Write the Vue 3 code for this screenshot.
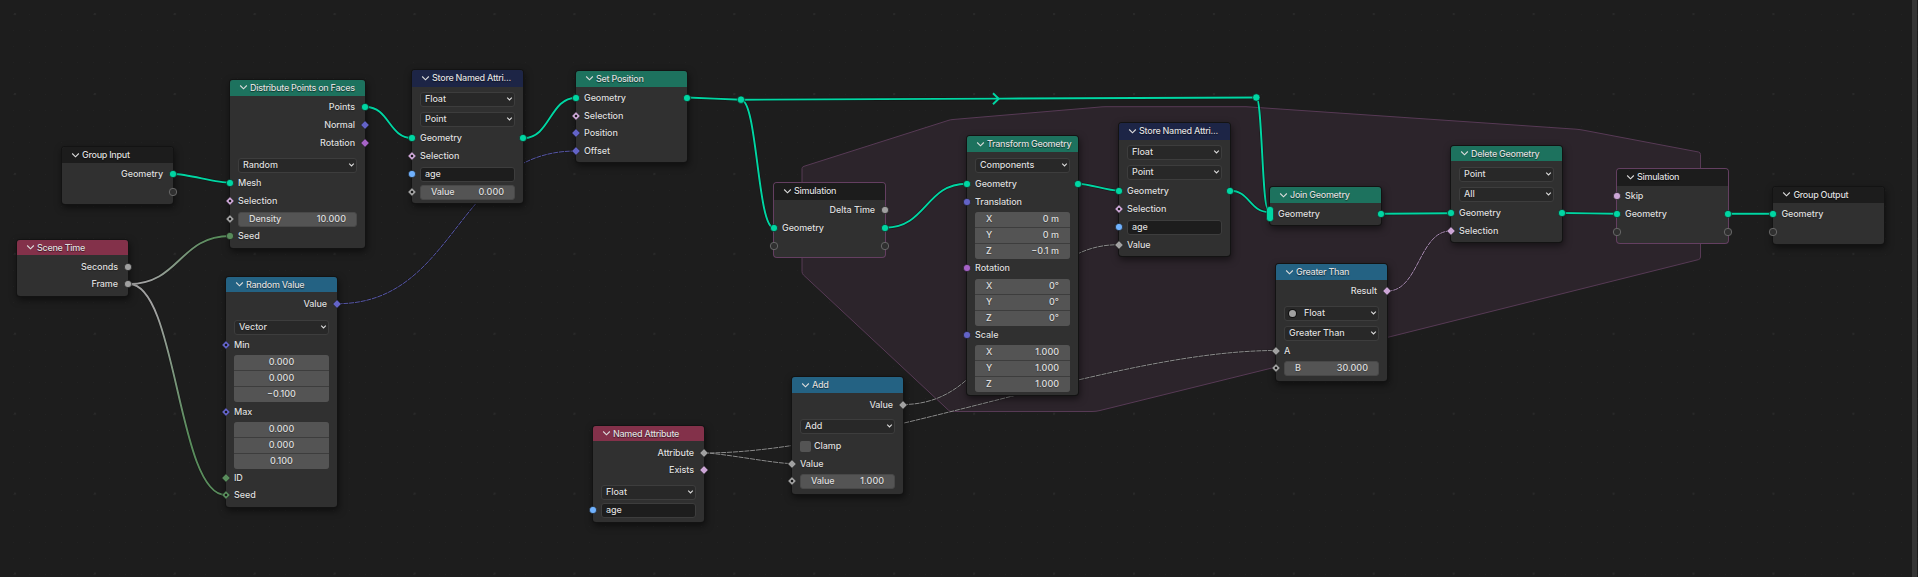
<script setup>
const C = {
  geo: '#00d6a3', vec: '#6363c7', rot: '#a663c7', bool: '#cca6d6',
  flt: '#a1a1a1', int: '#598c5c', str: '#70b2ff',
}
const o = (c, label, col, shape = 'dot') => ({ k: 'out', c, label, right: [col, shape] })
const i = (c, label, col, shape = 'dot') => ({ k: 'in', c, label, left: [col, shape] })
const both = (c, label, a, b) => ({ k: 'in', c, label, left: a, right: b })
const dd = (c, label, icon) => ({ k: 'select', c, label, icon })
const num = (c, label, value, col) => ({ k: 'num', c, label, value, left: [col, 'dia-dot'] })
const txt = (c, label) => ({ k: 'text', c, label, left: [C.str, 'dot'] })
const vec = (c, values, axes) => ({ k: 'vec', c, values, axes })
const G = [C.geo, 'dot']
const E = ['#303030', 'empty']

const rowH = { out: 14, in: 14, select: 16, num: 16, text: 16, vec: 48, check: 14 }

const raw = [
  { x: 62, y: 147, w: 111, b: 204, hd: 163, t: 155, kind: 'io', title: 'Group Input',
    rows: [o(174, 'Geometry', C.geo), { k: 'out', c: 192, label: '', right: E }] },
  { x: 17, y: 240, w: 111, b: 296, hd: 255, t: 247, kind: 'input', title: 'Scene Time',
    rows: [o(267, 'Seconds', C.flt), o(284, 'Frame', C.flt)] },
  { x: 230, y: 80, w: 135, b: 248, hd: 95.5, t: 87, kind: 'geo', title: 'Distribute Points on Faces',
    rows: [o(107, 'Points', C.geo), o(125, 'Normal', C.vec, 'dia'), o(143, 'Rotation', C.rot, 'dia'),
      dd(165, 'Random'), i(183, 'Mesh', C.geo), i(201, 'Selection', C.bool, 'dia-dot'),
      num(219, 'Density', '10.000', C.flt), i(236, 'Seed', C.int)] },
  { x: 226, y: 277, w: 111, b: 507, hd: 292, t: 284, kind: 'conv', title: 'Random Value',
    rows: [o(304, 'Value', C.vec, 'dia'), dd(327, 'Vector'), i(345, 'Min', C.vec, 'dia-dot'),
      vec(378, ['0.000', '0.000', '−0.100']), i(412, 'Max', C.vec, 'dia-dot'),
      vec(445, ['0.000', '0.000', '0.100']), i(478, 'ID', C.int, 'dia'), i(495, 'Seed', C.int, 'dia-dot')] },
  { x: 412, y: 70, w: 111, b: 203, hd: 86.5, t: 78, kind: 'attr', title: 'Store Named Attri...',
    rows: [dd(99, 'Float'), dd(119, 'Point'), both(138, 'Geometry', G, G),
      i(156, 'Selection', C.bool, 'dia-dot'), txt(174, 'age'), num(192, 'Value', '0.000', C.flt)] },
  { x: 576, y: 71, w: 111, b: 162, hd: 86.5, t: 79, kind: 'geo', title: 'Set Position',
    rows: [both(98, 'Geometry', G, G), i(116, 'Selection', C.bool, 'dia-dot'),
      i(133, 'Position', C.vec, 'dia'), i(151, 'Offset', C.vec, 'dia')] },
  { x: 593, y: 426, w: 111, b: 522, hd: 441, t: 433, kind: 'input', title: 'Named Attribute',
    rows: [o(453, 'Attribute', C.flt, 'dia'), o(470, 'Exists', C.bool, 'dia'), dd(492, 'Float'), txt(510, 'age')] },
  { x: 792, y: 377, w: 111, b: 494, hd: 393, t: 385, kind: 'conv', title: 'Add',
    rows: [o(404.5, 'Value', C.flt, 'dia'), dd(426, 'Add'), { k: 'check', c: 446, label: 'Clamp' },
      i(464, 'Value', C.flt, 'dia'), num(481, 'Value', '1.000', C.flt)] },
  { x: 774, y: 183, w: 111, b: 257, hd: 199.5, t: 191, kind: 'sim', title: 'Simulation',
    rows: [o(210, 'Delta Time', C.flt), both(228, 'Geometry', G, G), both(246, '', E, E)] },
  { x: 967, y: 136, w: 111, b: 394.5, hd: 152, t: 144, kind: 'geo', title: 'Transform Geometry',
    rows: [dd(165, 'Components'), both(184, 'Geometry', G, G), i(202, 'Translation', C.vec),
      vec(235, ['0 m', '0 m', '−0.1 m'], true), i(268, 'Rotation', C.rot),
      vec(302, ['0°', '0°', '0°'], true), i(335, 'Scale', C.vec),
      vec(368, ['1.000', '1.000', '1.000'], true)] },
  { x: 1119, y: 123, w: 111, b: 255.5, hd: 139.5, t: 131, kind: 'attr', title: 'Store Named Attri...',
    rows: [dd(152, 'Float'), dd(172, 'Point'), both(191, 'Geometry', G, G),
      i(209, 'Selection', C.bool, 'dia-dot'), txt(227, 'age'), i(245, 'Value', C.flt, 'dia')] },
  { x: 1270, y: 187, w: 111, b: 225, hd: 203, t: 195, kind: 'geo', title: 'Join Geometry',
    rows: [both(214, 'Geometry', [C.geo, 'multi'], G)] },
  { x: 1451, y: 146, w: 111, b: 242, hd: 161, t: 153, kind: 'geo', title: 'Delete Geometry',
    rows: [dd(174, 'Point'), dd(194, 'All'), both(213, 'Geometry', G, G), i(231, 'Selection', C.bool, 'dia')] },
  { x: 1276, y: 264, w: 111, b: 381, hd: 280, t: 272, kind: 'conv', title: 'Greater Than',
    rows: [o(291, 'Result', C.bool, 'dia'), dd(313, 'Float', true), dd(333, 'Greater Than'),
      i(350.5, 'A', C.flt, 'dia'), num(368, 'B', '30.000', C.flt)] },
  { x: 1617, y: 169, w: 111, b: 243, hd: 185.5, t: 177, kind: 'sim', title: 'Simulation',
    rows: [i(196, 'Skip', C.bool), both(214, 'Geometry', G, G), both(232, '', E, E)] },
  { x: 1773.4, y: 187, w: 111, b: 243.5, hd: 202.5, t: 194, kind: 'io', title: 'Group Output',
    rows: [i(214, 'Geometry', C.geo), { k: 'in', c: 232, label: '', left: E }] },
]

// Turn row centres into the gap that precedes each row in the node's column.
const nodes = raw.map((n) => {
  let end = n.hd
  const rows = n.rows.map((r) => {
    const h = rowH[r.k]
    const gap = r.c - h / 2 - end
    end = r.c + h / 2
    return { ...r, style: { height: h + 'px', marginTop: gap + 'px' } }
  })
  return {
    ...n, rows,
    style: { left: n.x + 'px', top: n.y + 'px', width: n.w + 'px', height: n.b - n.y + 'px' },
    head: { height: n.hd - n.y + 'px' },
  }
})

// Horizontal handles that shorten as the link gets flatter.
const curve = (x1, y1, x2, y2) => {
  const dx = Math.abs(x2 - x1)
  const h = 0.5 * dx * Math.min(1, (Math.abs(y2 - y1) / dx) * 3.25)
  return `M${x1} ${y1}C${x1 + h} ${y1} ${x2 - h} ${y2} ${x2} ${y2}`
}
const geoLinks = [
  [173.5, 174, 230, 182.7], [366, 107, 412, 138], [524, 138, 576, 97.7], [687.5, 97.5, 741, 99.7],
  [741, 99.7, 1256.3, 97.5], [741, 99.7, 773.7, 227.7], [885.7, 227.7, 966.5, 183.7],
  [1078, 183.7, 1118.5, 190.7], [1230.3, 190.7, 1269, 212], [1256.3, 97.5, 1268, 209],
  [1381, 213.8, 1450.3, 213.2], [1562, 213, 1616.5, 213.7], [1728.5, 213.7, 1773, 213.7],
].map((a) => curve(...a))
const fieldLinks = [
  [[337.5, 303.7, 576, 151], '#5656a8'],
  [[704, 453, 791, 463.5], '#8c8c8c'],
  [[704, 453, 1276, 350.5], '#8c8c8c'],
  [[903, 404.5, 1118.5, 244.7], '#8c8c8c'],
  [[1387.5, 291, 1450.5, 231], '#ab8cb4'],
].map(([a, c]) => ({ d: curve(...a), c }))
const seedLinks = [
  { d: curve(129, 284, 230, 236), g: 'url(#fade-up)' },
  { d: curve(129, 284, 225.5, 495), g: 'url(#fade-down)' },
]
</script>

<template>
  <main class="editor">
    <svg class="wires" width="1918" height="577" viewBox="0 0 1918 577">
      <defs>
        <pattern id="minor" width="16" height="16" x="5" y="6" patternUnits="userSpaceOnUse">
          <rect x="8" y="8" width="1" height="1" fill="#222" />
        </pattern>
        <pattern id="major" width="79.93" height="79.93" x="-25" y="54" patternUnits="userSpaceOnUse">
          <rect x="39" y="39" width="2" height="2" fill="#292929" />
        </pattern>
        <linearGradient id="fade-up" gradientUnits="userSpaceOnUse" x1="129" y1="284" x2="230" y2="236">
          <stop offset=".15" stop-color="#a1a1a1" /><stop offset=".85" stop-color="#598c5c" />
        </linearGradient>
        <linearGradient id="fade-down" gradientUnits="userSpaceOnUse" x1="129" y1="284" x2="226" y2="495">
          <stop offset=".15" stop-color="#a1a1a1" /><stop offset=".7" stop-color="#598c5c" />
        </linearGradient>
      </defs>
      <rect width="1918" height="577" fill="url(#minor)" />
      <rect width="1918" height="577" fill="url(#major)" />
      <path class="zone" d="M802 168.5Q802 167 804 166.3L948 120.5Q950 119.7 953 119.5L1098 107.2Q1102 106.7 1106 106.7H1246L1576 129.2Q1580 129.5 1584 130.3L1698.5 152Q1700.5 152.5 1700.5 154.5V257Q1700.5 259 1698.5 259.6L1387 337.5L1276 367L1100 410.5Q1096 411.5 1092 411.5H952Q950 411.5 948.5 410.2L803.5 275Q802 273.5 802 271.5Z" />
      <g class="field-back"><path v-for="(l, n) in fieldLinks" :key="n" :d="l.d" /></g>
      <g class="field"><path v-for="(l, n) in fieldLinks" :key="n" :d="l.d" :stroke="l.c" /></g>
      <g class="back"><path v-for="(l, n) in seedLinks" :key="n" :d="l.d" /></g>
      <g class="front"><path v-for="(l, n) in seedLinks" :key="n" :d="l.d" :stroke="l.g" /></g>
      <g class="back"><path v-for="(d, n) in geoLinks" :key="n" :d="d" /></g>
      <g class="front mesh-link"><path v-for="(d, n) in geoLinks" :key="n" :d="d" /><path d="M993 93.2L998.7 98.7L993 104.2" /></g>
      <circle cx="741" cy="99.7" r="3.7" fill="#00d6a3" stroke="#111" stroke-width=".6" />
      <circle cx="1256.3" cy="97.5" r="3.7" fill="#00d6a3" stroke="#111" stroke-width=".6" />
    </svg>

    <section v-for="(n, k) in nodes" :key="k" class="node" :class="n.kind" :style="n.style">
      <header class="head" :style="n.head">
        <svg class="fold" width="9" height="7" viewBox="0 0 9 7"><path d="M1.200 1.500L4.500 4.800L7.800 1.500" /></svg>
        <span class="title">{{ n.title }}</span>
      </header>
      <div v-for="(r, j) in n.rows" :key="j" class="row" :class="r.k" :style="r.style">
        <template v-if="r.k === 'select'">
          <div class="field-box">
            <i v-if="r.icon" class="type-dot"></i>
            <span>{{ r.label }}</span>
            <svg class="caret" width="7" height="6" viewBox="0 0 7 6"><path d="M1.200 1.700L3.500 4L5.800 1.700" /></svg>
          </div>
        </template>
        <div v-else-if="r.k === 'num'" class="field-box"><span>{{ r.label }}</span><span class="digits">{{ r.value }}</span></div>
        <div v-else-if="r.k === 'text'" class="field-box"><span>{{ r.label }}</span></div>
        <div v-else-if="r.k === 'vec'" class="stack" :class="{ axes: r.axes }">
          <div v-for="(v, m) in r.values" :key="m" class="cell">
            <span v-if="r.axes">{{ 'XYZ'[m] }}</span><span class="digits">{{ v }}</span>
          </div>
        </div>
        <template v-else-if="r.k === 'check'"><i class="box"></i><span>{{ r.label }}</span></template>
        <span v-else class="label">{{ r.label }}</span>

        <template v-for="side in ['left', 'right']" :key="side">
          <svg v-if="r[side]" class="socket" :class="side" width="12" height="18" viewBox="-6 -9 12 18">
            <circle v-if="r[side][1] === 'dot'" r="3.6" :fill="r[side][0]" stroke="#161616" stroke-width=".6" />
            <circle v-else-if="r[side][1] === 'empty'" r="3.7" fill="#303030" stroke="#6c6c6c" stroke-width=".9" />
            <rect v-else-if="r[side][1] === 'multi'" x="-3.5" y="-7.5" width="7" height="15" rx="3.2" :fill="r[side][0]" stroke="#161616" stroke-width=".5" />
            <template v-else>
              <path d="M0 -4.2L4.2 0L0 4.2L-4.2 0Z" :fill="r[side][0]" stroke="#161616" stroke-width=".5" />
              <circle v-if="r[side][1] === 'dia-dot'" r="1.25" fill="#1a1a1a" />
            </template>
          </svg>
        </template>
      </div>
    </section>
    <div class="scrollbar"></div>
  </main>
</template>

<style>
body { background: #1d1d1d; overflow: hidden; }
</style>
<style scoped>
.editor { position: relative; width: 1918px; height: 577px; overflow: hidden; background: #1d1d1d; color: #dedede; font: 500 9px/12px Inter, "Liberation Sans", sans-serif; letter-spacing: -.08px; }
.wires { display: block; fill: none; }
.zone { fill: #2c242b; stroke: #573a55; stroke-width: 1; }
.back { stroke: #101010; stroke-width: 3.2; stroke-opacity: .6; }
.front { stroke-width: 1.9; }
.mesh-link { stroke: #00d6a3; }
.field-back { stroke: #101010; stroke-width: 2; stroke-opacity: .35; }
.field { stroke-width: 1; stroke-dasharray: 5 .8; }
.node { position: absolute; box-sizing: border-box; border-radius: 3px; background: #303030; box-shadow: 0 0 0 1px #131313, 1px 3px 7px 1px rgba(0, 0, 0, .5); }
.head { display: flex; align-items: center; box-sizing: border-box; padding-left: 8.5px; border-radius: 3px 3px 0 0; white-space: nowrap; text-shadow: 0 1px 1px rgba(0, 0, 0, .55); }
.title { margin-left: 2.5px; letter-spacing: -.28px; }
.fold { flex: none; fill: none; stroke: #dcdcdc; stroke-width: 1.1; }
.io .head, .sim .head { background: #1c1c1c; }
.input .head { background: #83314a; }
.geo .head { background: #1d725e; }
.conv .head { background: #246283; }
.attr .head { background: #1d2546; }
.sim { box-shadow: 0 0 0 1px #643f61; }
.row { position: relative; display: flex; align-items: center; padding: 0 8px; white-space: nowrap; text-shadow: 0 1px 1px rgba(0, 0, 0, .3); }
.row.out { justify-content: flex-end; padding-right: 10px; }
.field-box { box-sizing: border-box; flex: 1; height: 15px; display: flex; align-items: center; border: 1px solid #3d3d3d; border-radius: 3px; padding: 0 4px; }
.select .field-box { background: #282828; padding-right: 1px; }
.text .field-box { background: #1d1d1d; }
.num .field-box { background: #545454; border-color: #484848; justify-content: space-between; padding: 0 10px; }
.caret { margin-left: auto; fill: none; stroke: #dcdcdc; stroke-width: 1.1; }
.type-dot { width: 7px; height: 7px; border-radius: 50%; background: #a1a1a1; margin: 0 8px 0 0; box-shadow: 0 0 0 1px #111; }
.stack { flex: 1; height: 47px; display: flex; flex-direction: column; gap: 1px; border-radius: 3px; overflow: hidden; background: #3d3d3d; }
.cell { flex: 1; display: flex; align-items: center; justify-content: center; background: #545454; }
.axes .cell { justify-content: space-between; padding: 0 11px; }
.digits { letter-spacing: 0; }
.box { width: 11px; height: 11px; border-radius: 2px; background: #545454; margin-right: 3px; }
.socket { position: absolute; top: 50%; margin-top: -9px; }
.socket.left { left: -6px; }
.socket.right { right: -6px; }
.scrollbar { position: absolute; right: 1px; top: 0; width: 5px; height: 577px; background: #353535; }
</style>
